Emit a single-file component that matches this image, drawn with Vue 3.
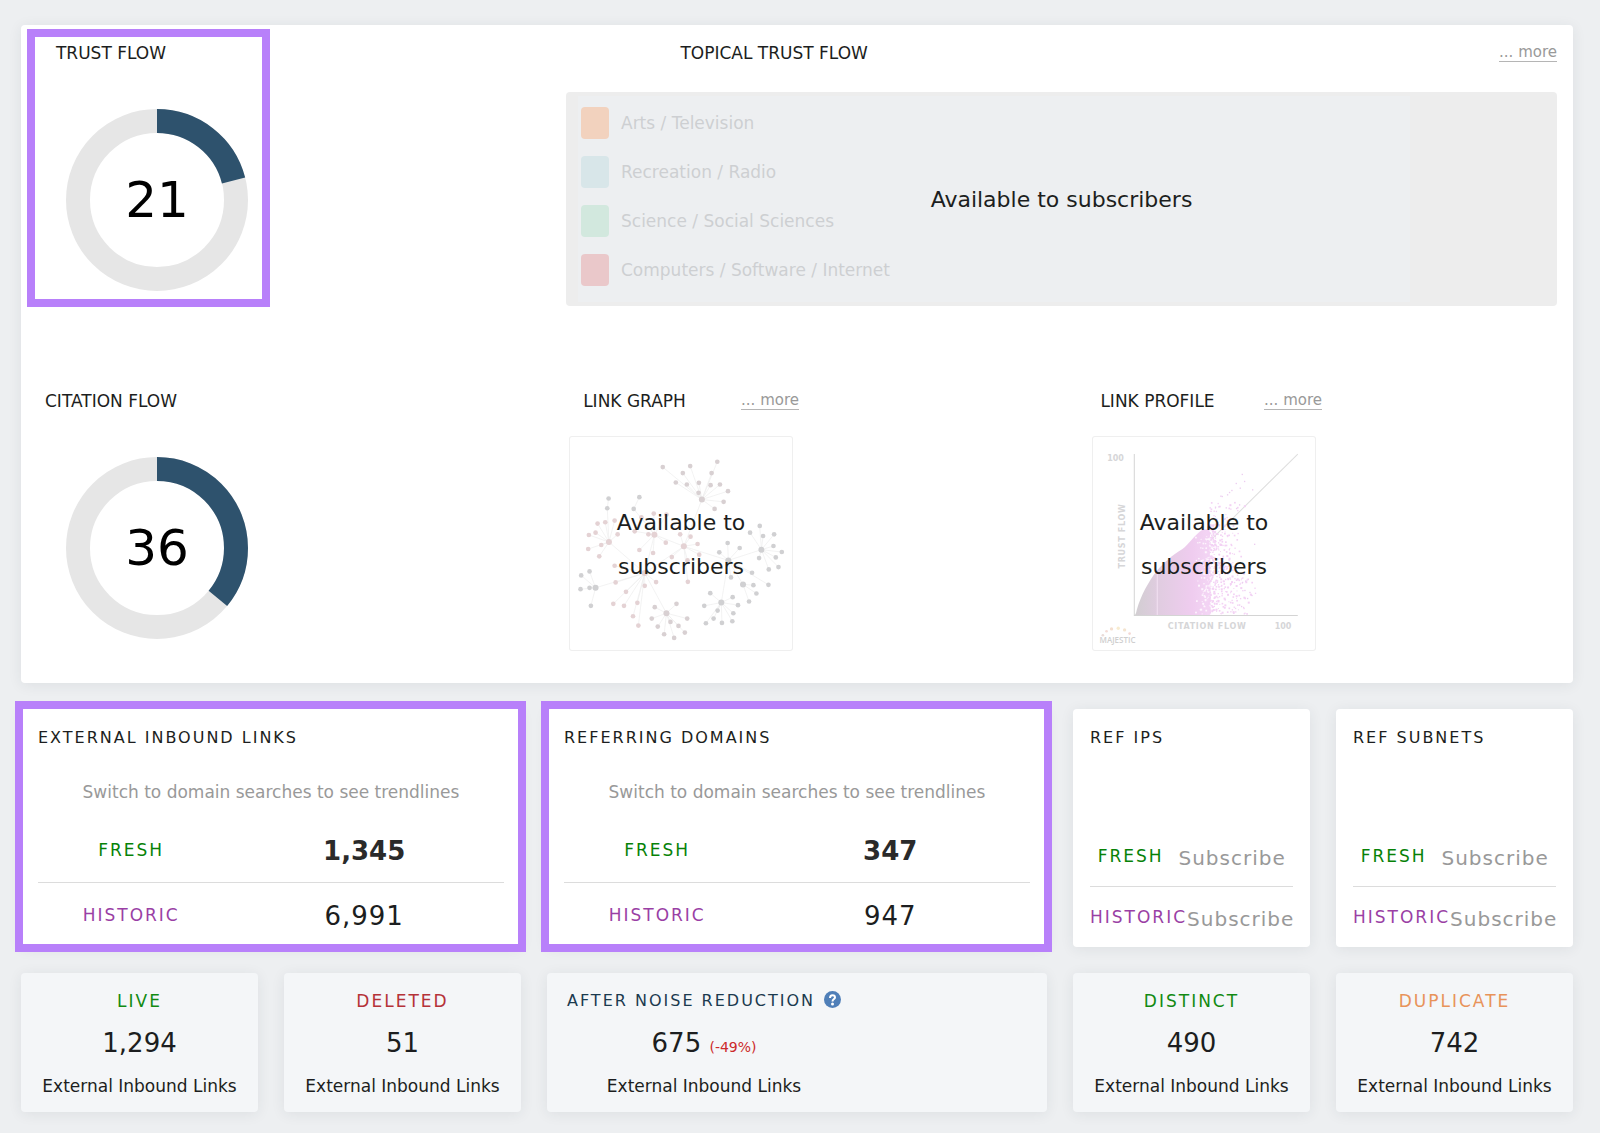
<script setup>
const flows = [
  { title: 'TRUST FLOW', value: 21 },
  { title: 'CITATION FLOW', value: 36 }
]

const topics = [
  { name: 'Arts / Television', tone: 'orange' },
  { name: 'Recreation / Radio', tone: 'teal' },
  { name: 'Science / Social Sciences', tone: 'green' },
  { name: 'Computers / Software / Internet', tone: 'red' }
]

const linkStats = [
  { title: 'EXTERNAL INBOUND LINKS', fresh: '1,345', historic: '6,991' },
  { title: 'REFERRING DOMAINS', fresh: '347', historic: '947' }
]

const lockedStats = ['REF IPS', 'REF SUBNETS']

const leftTotals = [
  { title: 'LIVE', value: '1,294', tone: 'live' },
  { title: 'DELETED', value: '51', tone: 'deleted' }
]

const rightTotals = [
  { title: 'DISTINCT', value: '490', tone: 'live' },
  { title: 'DUPLICATE', value: '742', tone: 'duplicate' }
]

// Link graph: each hub with the nodes that hang off it
const clusters = [
  { hub: [426, 358], tone: 'mixed', nodes: [[309, 261], [348, 307], [391, 258], [369, 279], [381, 313], [417, 308], [416, 338], [472, 245], [455, 279], [452, 315], [480, 313], [504, 333], [491, 365], [464, 386]] },
  { hub: [148, 485], tone: 'rose', nodes: [[88, 464], [108, 457], [114, 430], [137, 426], [165, 421], [174, 462], [125, 494], [86, 506], [119, 528]] },
  { hub: [284, 463], tone: 'rose', nodes: [[266, 462], [282, 400], [318, 487], [280, 518], [239, 509], [320, 403], [245, 411], [225, 453]] },
  { hub: [372, 498], tone: 'rose', nodes: [[361, 462], [392, 469], [413, 491], [336, 530], [418, 523], [383, 540], [384, 604]] },
  { hub: [604, 508], tone: 'grey', nodes: [[570, 457], [599, 437], [609, 467], [642, 462], [640, 497], [665, 515], [647, 531], [655, 560], [626, 567], [597, 533]] },
  { hub: [505, 540], tone: 'grey', nodes: [[503, 488], [539, 503], [478, 516], [576, 577], [513, 591], [625, 613]] },
  { hub: [549, 612], tone: 'grey', nodes: [[580, 614], [589, 639], [567, 663]] },
  { hub: [484, 666], tone: 'grey', nodes: [[451, 638], [433, 676], [473, 690], [438, 728], [461, 714], [486, 727], [517, 722], [520, 698], [534, 674], [518, 650]] },
  { hub: [320, 698], tone: 'mixed', nodes: [[285, 680], [350, 670], [276, 714], [294, 738], [332, 724], [313, 761], [343, 772], [356, 736], [375, 756], [382, 714]] },
  { hub: [255, 578], tone: 'rose', nodes: [[165, 556], [168, 606], [199, 634], [161, 670], [193, 676], [233, 667], [220, 707], [236, 735], [255, 616], [289, 605]] },
  { hub: [108, 622], tone: 'grey', nodes: [[65, 585], [90, 573], [63, 626], [90, 622], [94, 676]] }
]

const bridges = [
  [426, 358, 372, 498], [284, 463, 372, 498], [148, 485, 255, 578], [108, 622, 255, 578],
  [255, 578, 320, 698], [284, 463, 255, 578], [372, 498, 255, 578], [372, 498, 505, 540],
  [505, 540, 604, 508], [505, 540, 484, 666], [505, 540, 549, 612], [284, 463, 222, 386],
  [222, 386, 239, 351], [148, 485, 143, 384], [143, 384, 147, 355]
]

const loose = [[147, 355], [143, 384], [239, 351], [222, 386]]

// Scatter for the link profile, thinning out to the right
let seed = 7
function random() {
  seed = (seed * 16807) % 2147483647
  return seed / 2147483647
}
const scatter = []
for (let i = 0; i < 560; i++) {
  const reach = random() * random()
  const y = 365 + random() * 335
  const start = y < 420 ? 390 : 380
  const span = y > 590 ? 150 : 110
  const size = 3 + Math.round(random() * 3)
  if (y > 430 || random() < 0.35) scatter.push({ x: start + reach * span, y, size })
}
const holes = []
for (let i = 0; i < 130; i++) {
  holes.push({ x: 390 - random() * random() * 50, y: 465 + random() * 235, size: 3 + Math.round(random() * 3) })
}
const outliers = [
  [484, 281], [491, 302], [466, 308], [478, 322], [453, 329], [446, 335], [440, 342], [420, 346],
  [424, 347], [515, 327], [476, 372], [404, 379], [414, 378], [436, 381], [388, 381], [467, 383],
  [507, 634], [513, 643], [492, 628], [500, 652], [482, 676], [485, 604], [494, 600], [521, 490]
]
</script>

<template>
  <main class="page">
    <section class="card overview">
      <div class="row row-topical">
        <section class="flow">
          <h2 class="heading">{{ flows[0].title }}</h2>
          <div class="donut">
            <svg viewBox="0 0 182 182" aria-hidden="true">
              <circle class="track" cx="91" cy="91" r="79" />
              <circle class="arc" cx="91" cy="91" r="79" pathLength="100" :stroke-dasharray="`${flows[0].value} 100`" transform="rotate(-90 91 91)" />
            </svg>
            <span class="donut-value">{{ flows[0].value }}</span>
          </div>
          <span class="flow-highlight" aria-hidden="true"></span>
        </section>

        <section class="topical">
          <header class="topical-head">
            <h2 class="heading">TOPICAL TRUST FLOW</h2>
            <a class="more" href="#topical">... more</a>
          </header>
          <div class="locked topics-panel">
            <div class="topics-preview">
              <ul class="topics">
                <li v-for="topic in topics" :key="topic.name">
                  <span class="swatch" :class="topic.tone"></span>{{ topic.name }}
                </li>
              </ul>
            </div>
            <p class="locked-text">Available to subscribers</p>
          </div>
        </section>
      </div>

      <div class="row row-links">
        <section class="flow">
          <h2 class="heading">{{ flows[1].title }}</h2>
          <div class="donut">
            <svg viewBox="0 0 182 182" aria-hidden="true">
              <circle class="track" cx="91" cy="91" r="79" />
              <circle class="arc" cx="91" cy="91" r="79" pathLength="100" :stroke-dasharray="`${flows[1].value} 100`" transform="rotate(-90 91 91)" />
            </svg>
            <span class="donut-value">{{ flows[1].value }}</span>
          </div>
        </section>

        <section class="preview">
          <header class="preview-head">
            <h2 class="heading">LINK GRAPH</h2>
            <a class="more" href="#graph">... more</a>
          </header>
          <div class="locked thumb">
            <svg viewBox="30 168 667 643" aria-hidden="true">
              <g stroke="#ededed" stroke-width="2">
                <line v-for="(b, i) in bridges" :key="i" :x1="b[0]" :y1="b[1]" :x2="b[2]" :y2="b[3]" />
                <template v-for="(c, i) in clusters" :key="'c' + i">
                  <line v-for="(n, j) in c.nodes" :key="j" :x1="c.hub[0]" :y1="c.hub[1]" :x2="n[0]" :y2="n[1]" />
                </template>
              </g>
              <circle v-for="(n, i) in loose" :key="i" class="node-grey" :cx="n[0]" :cy="n[1]" r="7" />
              <g v-for="(c, i) in clusters" :key="'n' + i" :class="'node-' + c.tone">
                <circle :cx="c.hub[0]" :cy="c.hub[1]" r="9" />
                <circle v-for="(n, j) in c.nodes" :key="j" :cx="n[0]" :cy="n[1]" r="7" />
              </g>
            </svg>
            <p class="locked-text">Available to<br>subscribers</p>
          </div>
        </section>

        <section class="preview">
          <header class="preview-head">
            <h2 class="heading">LINK PROFILE</h2>
            <a class="more" href="#profile">... more</a>
          </header>
          <div class="locked thumb">
            <svg viewBox="38 168 667 643" aria-hidden="true">
              <defs>
                <linearGradient id="cloud" x1="0" x2="1">
                  <stop offset="0" stop-color="#d2ced2" />
                  <stop offset="0.3" stop-color="#e0cce0" />
                  <stop offset="0.75" stop-color="#efccef" />
                  <stop offset="1" stop-color="#f4d6f5" />
                </linearGradient>
              </defs>
              <path d="M163 705 652 222" stroke="#dedede" stroke-width="3" />
              <path d="M167 703C176 660 196 620 222 582 246 550 278 524 306 507 328 492 340 466 368 448L388 446 392 703Z" fill="url(#cloud)" />
              <rect v-for="(d, i) in holes" :key="'h' + i" :x="d.x" :y="d.y" :width="d.size" :height="d.size" fill="#fdf5fd" />
              <rect v-for="(d, i) in scatter" :key="'s' + i" :x="d.x" :y="d.y" :width="d.size" :height="d.size" fill="#f3d2f4" />
              <rect v-for="(d, i) in outliers" :key="'o' + i" :x="d[0]" :y="d[1]" width="4" height="4" fill="#eccdf0" />
              <path d="M232 578V703" stroke="#eedcee" stroke-width="4" />
              <path d="M163 222V705H652" fill="none" stroke="#d4d4d4" stroke-width="3" />
              <g class="chart-text">
                <text x="82" y="242">100</text>
                <text x="583" y="745">100</text>
                <text class="axis" x="263" y="745">CITATION FLOW</text>
                <text class="axis" transform="translate(136 564) rotate(-90)">TRUST FLOW</text>
                <text class="brand" x="59" y="788">MAJESTIC</text>
              </g>
              <g>
                <circle cx="69" cy="764" r="4" fill="#eadcd8" />
                <circle cx="80" cy="752" r="4" fill="#f4dcd6" />
                <circle cx="95" cy="745" r="5" fill="#f4dfd0" />
                <circle cx="115" cy="743" r="5" fill="#f8ecd0" />
                <circle cx="134" cy="748" r="5" fill="#f4e4d0" />
                <circle cx="149" cy="759" r="4" fill="#f4d8d4" />
              </g>
            </svg>
            <p class="locked-text">Available to<br>subscribers</p>
          </div>
        </section>
      </div>
    </section>

    <div class="grid">
      <section v-for="stat in linkStats" :key="stat.title" class="card stat wide">
        <h2 class="title">{{ stat.title }}</h2>
        <p class="note">Switch to domain searches to see trendlines</p>
        <dl class="figures tall">
          <div class="figure">
            <dt class="fresh">FRESH</dt>
            <dd class="bold">{{ stat.fresh }}</dd>
          </div>
          <div class="figure">
            <dt class="historic">HISTORIC</dt>
            <dd>{{ stat.historic }}</dd>
          </div>
        </dl>
        <span class="stat-highlight" aria-hidden="true"></span>
      </section>

      <section v-for="name in lockedStats" :key="name" class="card stat">
        <h2 class="title">{{ name }}</h2>
        <dl class="figures">
          <div class="figure">
            <dt class="fresh">FRESH</dt>
            <dd><a class="subscribe" href="#subscribe">Subscribe</a></dd>
          </div>
          <div class="figure">
            <dt class="historic">HISTORIC</dt>
            <dd><a class="subscribe" href="#subscribe">Subscribe</a></dd>
          </div>
        </dl>
      </section>

      <section v-for="total in leftTotals" :key="total.title" class="card total">
        <h2 class="label" :class="total.tone">{{ total.title }}</h2>
        <p class="amount">{{ total.value }}</p>
        <p class="caption">External Inbound Links</p>
      </section>

      <section class="card total noise wide">
        <div class="noise-body">
          <h2 class="title">
            AFTER NOISE REDUCTION
            <button class="help" type="button" aria-label="About noise reduction">
              <svg viewBox="0 0 34 34" aria-hidden="true">
                <circle cx="17" cy="17" r="17" fill="#4f7fb8" />
                <path d="M12 14C12 6 22 7 22 13 22 16 17 16 17 21" fill="none" stroke="#fff" stroke-width="4" />
                <circle cx="17" cy="26" r="3" fill="#fff" />
              </svg>
            </button>
          </h2>
          <p class="amount">675 <span class="change">(-49%)</span></p>
          <p class="caption">External Inbound Links</p>
        </div>
      </section>

      <section v-for="total in rightTotals" :key="total.title" class="card total">
        <h2 class="label" :class="total.tone">{{ total.title }}</h2>
        <p class="amount">{{ total.value }}</p>
        <p class="caption">External Inbound Links</p>
      </section>
    </div>
  </main>
</template>

<style>
body {
  background: #edeff1;
}
</style>

<style scoped>
.page {
  padding: 25px 27px 21px 21px;
  color: #1c1e20;
  font-family: "DejaVu Sans", Verdana, sans-serif;
  font-size: 17px;
  line-height: 24px;
}

h2, p, dl, dd, ul {
  margin: 0;
  padding: 0;
}

h2 {
  font-size: 17px;
  font-weight: 400;
}

.card {
  position: relative;
  border-radius: 4px;
  background: #fff;
  box-shadow: 0 2px 14px rgba(40, 50, 60, 0.08);
}

.overview {
  padding: 16px 16px 32px 0;
}

.row {
  display: grid;
}

.row-topical {
  grid-template-columns: 545fr 991fr;
}

.row-links {
  grid-template-columns: 545fr 523fr 468fr;
  margin-top: 83px;
}

.heading {
  text-align: center;
}

.more {
  margin-top: 2px;
  border-bottom: 1px solid #b5b5b5;
  color: #999;
  font-size: 15px;
  line-height: 18px;
  text-decoration: none;
}

/* Flow metrics */
.flow {
  position: relative;
  width: 249px;
}

.flow .heading {
  width: 180px;
}

.donut {
  display: grid;
  place-items: center;
  width: 182px;
  margin: 44px 0 0 45px;
}

.donut > * {
  grid-area: 1 / 1;
}

.donut svg {
  display: block;
  width: 100%;
}

.track, .arc {
  fill: none;
  stroke-width: 24px;
}

.track {
  stroke: #e6e6e6;
}

.arc {
  stroke: #2e526d;
}

.donut-value {
  color: #000;
  font-size: 50px;
  line-height: 60px;
}

.flow-highlight {
  position: absolute;
  inset: -12px 0 -1px 6px;
  border: 8px solid #b880fa;
}

/* Topics */
.topical-head {
  display: flex;
  align-items: flex-start;
  justify-content: space-between;
}

.topical-head .heading {
  width: 42%;
}

.locked {
  display: grid;
}

.locked > * {
  grid-area: 1 / 1;
}

.locked-text {
  place-self: center;
  padding-top: 2px;
  color: #1c1e20;
  font-size: 22px;
  line-height: 44px;
  text-align: center;
}

.topics-panel {
  height: 214px;
  margin-top: 27px;
  border-radius: 4px;
  background: #ededed;
}

.topics-preview {
  width: 84%;
  margin: 4px 12px;
  background: #edeff1;
}

.topics {
  display: grid;
  gap: 17px;
  padding: 11px 3px;
  color: #cdcfd2;
  list-style: none;
}

.topics li {
  display: flex;
  align-items: center;
  gap: 12px;
}

.swatch {
  width: 28px;
  height: 32px;
  border-radius: 4px;
}

.orange { background: #f2d2be; }
.teal { background: #d8e6e9; }
.green { background: #d2e8de; }
.red { background: #eac8ca; }

/* Link previews */
.preview {
  width: 233px;
}

.preview-head {
  display: grid;
  grid-template-columns: 137px auto;
  align-items: start;
  justify-content: space-between;
}

.thumb {
  height: 215px;
  margin: 23px 6px 0 3px;
  border-radius: 3px;
  box-shadow: inset 0 0 0 1px #efefef;
}

.thumb svg {
  display: block;
  width: 100%;
  height: 100%;
}

.node-grey { fill: #d0d0d2; }
.node-mixed { fill: #d8d0d2; }
.node-rose { fill: #e4d2d4; }

.chart-text {
  fill: #d6d6d8;
  font-size: 24px;
  font-weight: 700;
}

.axis {
  letter-spacing: 2px;
}

.brand {
  fill: #cfcfcf;
  font-family: "Open Sans", sans-serif;
  font-weight: 600;
}

/* Lower cards */
.grid {
  display: grid;
  grid-template-columns: repeat(6, minmax(0, 1fr));
  gap: 26px;
  margin-top: 26px;
}

.wide {
  grid-column: span 2;
}

.stat {
  display: flex;
  flex-direction: column;
  padding: 17px 17px 0;
}

.title {
  font-size: 16px;
  letter-spacing: 2px;
}

.note {
  margin: 30px 0 14px;
  color: #999;
  text-align: center;
}

.figures {
  margin-top: auto;
}

.figure {
  display: flex;
  align-items: center;
  height: 60px;
}

.tall .figure {
  height: 64px;
}

.figure + .figure {
  border-top: 1px solid #dcdcdc;
}

.figure dt {
  flex: 0 0 auto;
  min-width: 40%;
  letter-spacing: 2px;
  text-align: center;
}

.figure dd {
  flex: 1;
  padding-top: 2px;
  font-size: 26px;
  letter-spacing: 1px;
  line-height: 32px;
  text-align: center;
}

.figure .bold {
  color: #2a2a2a;
  font-weight: 700;
  letter-spacing: normal;
}

.subscribe {
  color: #999;
  font-size: 20px;
  text-decoration: none;
}

.fresh { color: #078207; }
.historic { color: #9a3fa5; }

.stat-highlight {
  position: absolute;
  inset: -8px -5px -5px -6px;
  border: 8px solid #b880fa;
}

.total {
  padding: 16px 8px 14px;
  background: #f4f6f8;
  text-align: center;
}

.label {
  letter-spacing: 2px;
}

.live { color: #128a12; }
.deleted { color: #b53238; }
.duplicate { color: #e8935a; }

.amount {
  margin: 14px 0 15px;
  font-size: 26px;
  line-height: 32px;
}

.noise {
  padding-left: 20px;
}

.noise-body {
  width: max-content;
}

.noise .title {
  display: flex;
  gap: 9px;
  color: #1b3a4f;
}

.help {
  width: 17px;
  height: 17px;
  margin-top: 2px;
  padding: 0;
  border: 0;
  background: none;
}

.help svg {
  display: block;
}

.change {
  color: #cc2a2a;
  font-size: 14px;
  line-height: 16px;
}
</style>
